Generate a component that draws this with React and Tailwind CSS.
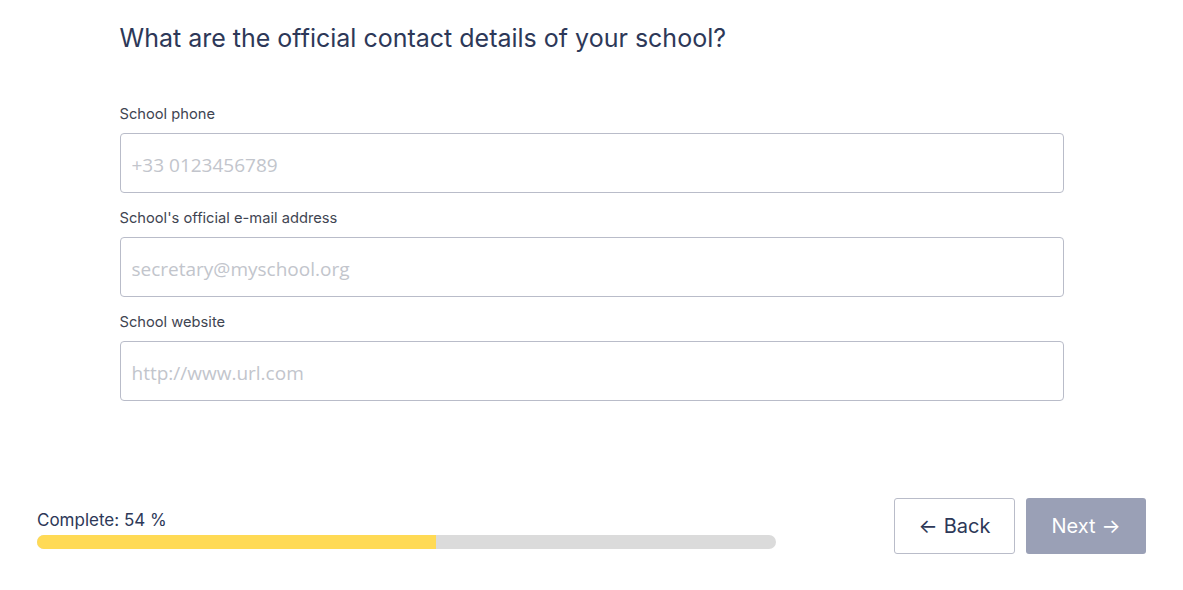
import React from "react";

function Field({ label, placeholder, type = "text" }) {
  return (
    <div className="flex flex-col">
      <label className="text-[14.7px] leading-[20px] text-[#3f4552] mb-[9px]">{label}</label>
      <input
        type={type}
        placeholder={placeholder}
        className="h-[60px] w-full rounded-[4px] border border-[#b9bcc9] bg-white pl-[11px] pr-[12px] pt-[3px] text-[19px] text-[#333] outline-none placeholder:text-[#c2c5cc]"
        style={{ fontFamily: '"Open Sans", "Noto Sans", sans-serif' }}
      />
    </div>
  );
}

export default function App() {
  return (
    <div className="min-h-[590px] w-full bg-white" style={{ fontFamily: 'Inter, "Noto Sans", sans-serif' }}>
      <div className="mx-auto w-[944px] pt-[22px]">
        <h1 className="text-[25px] leading-[32px] font-normal text-[#2d3858]">
          What are the official contact details of your school?
        </h1>
        <div className="mt-[50px] flex flex-col gap-[15px]">
          <Field label="School phone" placeholder="+33 0123456789" />
          <Field label="School's official e-mail address" placeholder="secretary@myschool.org" />
          <Field label="School website" placeholder="http://www.url.com" />
        </div>
      </div>
      <div className="mt-[97px] flex items-center justify-between pl-[37px] pr-[37px]">
        <div className="w-[739px] pt-[4px]">
          <div className="text-[17px] leading-[24px] text-[#2d3858]">Complete: 54 %</div>
          <div className="mt-[3px] h-[14px] w-full overflow-hidden rounded-full bg-[#dbdbdb]">
            <div className="h-full bg-[#ffda55]" style={{ width: "54%" }} />
          </div>
        </div>
        <div className="flex gap-[11px]">
          <button className="flex h-[56px] w-[121px] items-center justify-center rounded-[3px] border border-[#b9bcc9] bg-white text-[20px] text-[#2d3858]">
            <span className="mr-[6px]">←</span>Back
          </button>
          <button className="flex h-[56px] w-[120px] items-center justify-center rounded-[3px] bg-[#9aa0b6] text-[20px] text-white">
            Next<span className="ml-[6px]">→</span>
          </button>
        </div>
      </div>
    </div>
  );
}
